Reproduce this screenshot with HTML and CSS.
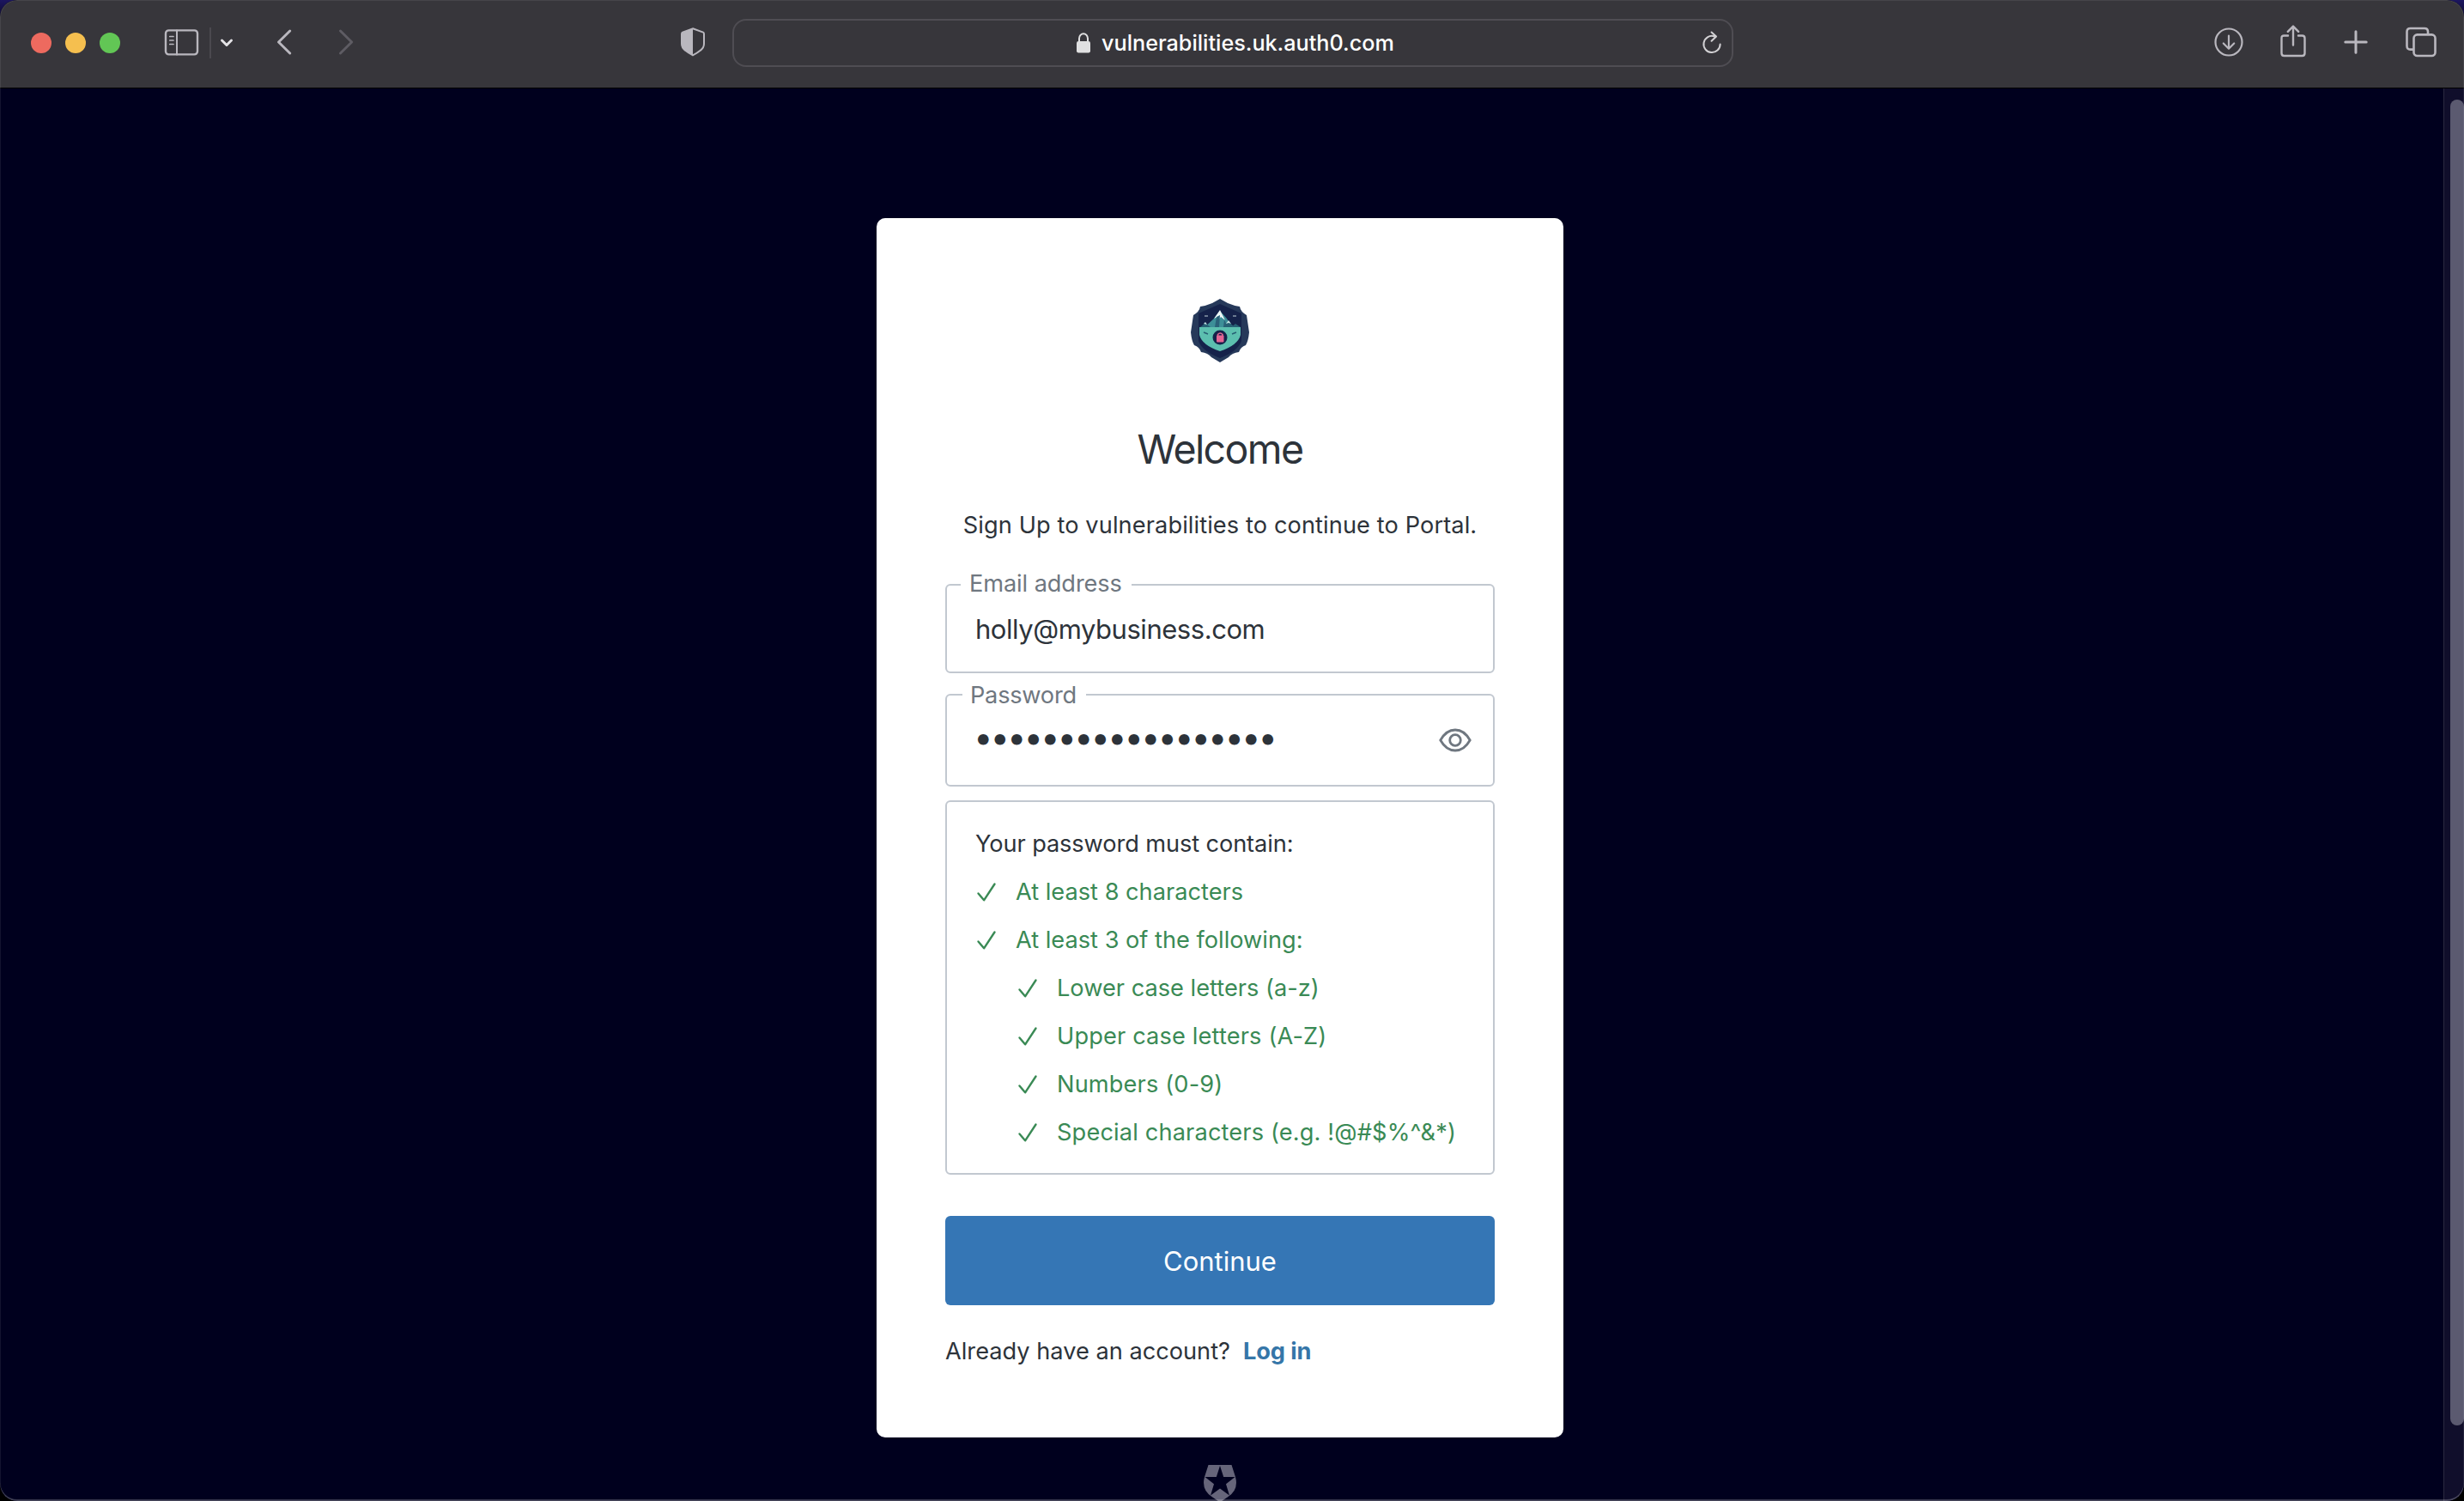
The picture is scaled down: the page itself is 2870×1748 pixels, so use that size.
FILE: index.html
```html
<!DOCTYPE html>
<html lang="en">
<head>
<meta charset="utf-8">
<title>Sign up</title>
<link rel="stylesheet" href="styles.css">
</head>
<body>
<div class="window">
  <header class="toolbar">
    <div class="lights"><span class="light red"></span><span class="light yellow"></span><span class="light green"></span></div>
    <svg class="sidebar" viewBox="0 0 40 32" width="40" height="32" fill="none" stroke="#b9b7be" stroke-width="2.4" stroke-linecap="round"><rect x="2" y="2.400" width="37" height="28" rx="3.6"/><path d="M15 2.500v28" stroke-width="2"/><path d="M6.800 9.500h4.2M6.800 14h4.2M6.800 18.500h4.2" stroke-width="1.700"/></svg>
    <span class="split"></span>
    <svg class="chevron" viewBox="0 0 16 10" width="16" height="10" fill="none" stroke="#e4e3e6" stroke-width="3" stroke-linecap="round" stroke-linejoin="round"><path d="M2.500 2L8 7.500 13.500 2"/></svg>
    <svg class="back" viewBox="0 0 18 30" width="18" height="30" fill="none" stroke="#b9b7be" stroke-width="3" stroke-linecap="round" stroke-linejoin="round"><path d="M15.700 2L2.500 15l13.200 13"/></svg>
    <svg class="forward" viewBox="0 0 18 30" width="18" height="30" fill="none" stroke="#5e5c63" stroke-width="3" stroke-linecap="round" stroke-linejoin="round"><path d="M2.500 2l13.200 13-13.200 13"/></svg>
    <svg class="shield" viewBox="0 0 28 34" width="28" height="34"><path d="M14 1.200L26 5.600Q27 6 27 7.500V19q0 4.500-4 7.600Q19 30 14 32.300 9 30 5 26.600 1 23.500 1 19V7.500Q1 6 2 5.600z" fill="none" stroke="#b9b7be" stroke-width="2"/><path d="M14 1.200V32.300Q9 30 5 26.600 1 23.500 1 19V7.500Q1 6 2 5.600z" fill="#b9b7be"/></svg>
    <div class="address">
      <svg class="lock" viewBox="0 0 16 24" width="16" height="24"><rect y="10" width="16" height="13.500" rx="2.200" fill="#e0e0e1"/><path d="M3 11V6.800a5 5.500 0 0 1 10 0V11" fill="none" stroke="#e0e0e1" stroke-width="2"/></svg>
      <span class="url">vulnerabilities.uk.auth0.com</span>
      <svg class="reload" viewBox="0 0 24 28" width="24" height="28" fill="none" stroke="#d2d1d4" stroke-width="2" stroke-linecap="round" stroke-linejoin="round"><path d="M14.500 6.200A9.600 9.600 0 1 0 21.600 15.500M11.500 1.500l5.500 5-5.500 5.300"/></svg>
    </div>
    <svg class="download" viewBox="0 0 34 34" width="34" height="34" fill="none" stroke="#b9b7be" stroke-width="2.200" stroke-linecap="round" stroke-linejoin="round"><circle cx="17" cy="17" r="15.500"/><path d="M17 9.500v15M10.800 18.500l6.200 6.200 6.200-6.200"/></svg>
    <svg class="share" viewBox="0 0 30 38" width="30" height="38" fill="none" stroke="#b9b7be" stroke-width="2.400" stroke-linecap="round" stroke-linejoin="round"><path d="M9 12.500H4.500q-3 0-3 3V33q0 3 3 3h21q3 0 3-3V15.500q0-3-3-3H21M15 23.500V2M8.800 7.800L15 1.600l6.200 6.200"/></svg>
    <svg class="plus" viewBox="0 0 28 28" width="28" height="28" stroke="#b9b7be" stroke-width="3" stroke-linecap="round"><path d="M14 1.800v24.400M1.800 14h24.400"/></svg>
    <svg class="tabs" viewBox="0 0 36 36" width="36" height="36" fill="none" stroke="#b9b7be" stroke-width="2.600"><rect x="9.500" y="9.400" width="25" height="24.600" rx="4"/><path d="M9 26.600H5.500q-4 0-4-4V6q0-4 4-4H22q4 0 4 4v3"/></svg>
  </header>
  <main class="page">
    <div class="content">
      <section class="card">
        <svg class="logo" viewBox="0 0 72 76" width="72" height="76">
          <path d="M36 1l9 5q7 3 14 4 1 6 8 10l3 20q-1 10-4 15-6 2-8 8-8 1-12 6l-10 6-10-6q-4-5-12-6-2-6-8-8-3-5-4-15l3-20q7-4 8-10 7-1 14-4z" fill="#26395a"/>
          <path d="M36 7l25 11v32q-4 12-25 20-21-8-25-20V18z" fill="#15224a"/>
          <path d="M12 34h48v9q-3 12-24 19-21-7-24-19z" fill="#5cbfaf"/>
          <path d="M18 34l11-10 7-9 8 9 3 5 6 5z" fill="#3d8f98"/><path d="M36 14l-7 10 4-2 1 4 3-4 5 4z" fill="#eef7f7"/>
          <path d="M32 22l4-2-1 14h-5zM41 25l4 9h-5z" fill="#2a6179"/>
          <path d="M13 34l6-5 6 5zM40 34l6-7 6 7zM49 34l5-4 6 4z" fill="#276074"/><path d="M46 26l-3 4 3-1 3 1zM19 28l-2 2 4 1z" fill="#c5e5e3"/>
          <path d="M18 21h4M51 21h4" stroke="#c2d4d9" stroke-width="1"/>
          <path d="M17 40l5 2M55 40l-5 2" stroke="#276074" stroke-width="1.500"/>
          <circle cx="36" cy="46" r="8.500" fill="#15224a"/>
          <rect x="32" y="43.500" width="8.500" height="8" rx="1" fill="#e26594"/><path d="M33.500 45v-2.500q2.700-3 5.500 0V45" fill="none" stroke="#e26594" stroke-width="1.600"/>
        </svg>
        <h1 class="title">Welcome</h1>
        <p class="intro">Sign Up to vulnerabilities to continue to Portal.</p>
        <div class="field email"><span class="label">Email address</span><span class="value">holly@mybusiness.com</span></div>
        <div class="field password"><span class="label">Password</span><span class="dots">••••••••••••••••••</span>
          <svg class="eye" viewBox="0 0 38 28" width="38" height="28"><path d="M1.800 14Q8.500 2 19 2T36.200 14Q29.500 26 19 26T1.800 14z"/><circle cx="19" cy="14" r="6.300"/></svg></div>
        <div class="rules">
          <p class="rule head">Your password must contain:</p>
          <p class="rule ok"><svg class="check" viewBox="0 0 22 22" width="22" height="22"><path d="M1.500 12.500l6.600 7.800L20.500 1.500"/></svg>At least 8 characters</p>
          <p class="rule ok"><svg class="check" viewBox="0 0 22 22" width="22" height="22"><path d="M1.500 12.500l6.600 7.800L20.500 1.500"/></svg>At least 3 of the following:</p>
          <p class="rule ok sub"><svg class="check" viewBox="0 0 22 22" width="22" height="22"><path d="M1.500 12.500l6.600 7.800L20.500 1.500"/></svg>Lower case letters (a-z)</p>
          <p class="rule ok sub wide"><svg class="check" viewBox="0 0 22 22" width="22" height="22"><path d="M1.500 12.500l6.600 7.800L20.500 1.500"/></svg>Upper case letters (A-Z)</p>
          <p class="rule ok sub wide"><svg class="check" viewBox="0 0 22 22" width="22" height="22"><path d="M1.500 12.500l6.600 7.800L20.500 1.500"/></svg>Numbers (0-9)</p>
          <p class="rule ok sub wide"><svg class="check" viewBox="0 0 22 22" width="22" height="22"><path d="M1.500 12.500l6.600 7.800L20.500 1.500"/></svg>Special characters (e.g. !@#$%^&amp;*)</p>
        </div>
        <button class="continue">Continue</button>
        <p class="login"><span>Already have an account?</span><a class="link">Log in</a></p>
      </section>
      <svg class="badge" viewBox="0 0 38 42" width="38" height="42"><path fill="#66657a" d="M5.500 0h27L37 14Q41 29 28.500 37L19 43.500 9.500 37Q-3 29 1 14z"/><path fill="#00001e" d="M19 1l4.200 13H36.500L26 22.200 30 35.500 19 27.500 8 35.500l4-13.300L1.500 14h13.300z"/></svg>
    </div>
    <div class="track"><span class="thumb"></span></div>
  </main>
</div>
</body>
</html>
```
FILE: styles.css
```css
* { box-sizing: border-box; }
body { margin: 0; background: linear-gradient(#1c1660, #000 40px); font-family: Inter, "Liberation Sans", sans-serif; color: #2d333a; }
h1, p { margin: 0; font-weight: 400; }
svg { display: block; flex: none; overflow: visible; }
.window { width: 2870px; height: 1748px; overflow: hidden; display: flex; flex-direction: column; background: #00001e; border-radius: 20px; position: relative; }
.window::after { content: ""; position: absolute; inset: 0; border-radius: 20px; box-shadow: inset 0 -2px 0 rgba(255, 255, 255, .2), inset 0 0 0 1px rgba(255, 255, 255, .08); pointer-events: none; }
.toolbar { height: 103px; flex: none; display: flex; align-items: center; padding: 0 32px 4px 36px; background: #37363b; border-bottom: 1px solid #000; }
.lights { display: flex; gap: 16px; padding-top: 2px; }
.light { width: 24px; height: 24px; border-radius: 50%; }
.red { background: #ed6a5f; }
.yellow { background: #f5bf4f; }
.green { background: #62c655; }
.sidebar { margin-left: 51px; }
.split { width: 2px; height: 36px; background: #4b494f; margin: 2px 0 0 13px; }
.chevron { margin: 1px 0 0 10px; }
.back { margin-left: 50px; }
.forward { margin-left: 54px; }
.shield { margin-left: 381px; }
.address { width: 1166px; height: 56px; margin: 2px 0 0 32px; border: 2px solid #4f4d53; border-radius: 16px; display: flex; align-items: center; padding: 0 11px 0 399px; }
.url { margin-left: 13px; font-size: 25.2px; font-weight: 500; color: #fff; }
.reload { margin-left: auto; }
.download { margin-left: 560px; }
.share { margin: 0 0 3px 43px; }
.plus { margin: 0 0 1px 44px; }
.tabs { margin-left: 44px; }
.page { flex: 1; min-height: 0; display: flex; justify-content: space-between; }
.content { flex: 1; display: flex; flex-direction: column; align-items: center; padding: 151px 4px 0 0; }
.card { width: 800px; height: 1420px; flex: none; background: #fff; border-radius: 10px; padding: 93px 80px 0; display: flex; flex-direction: column; }
.logo { align-self: center; }
.title { margin-top: 71px; height: 58px; line-height: 58px; font-size: 46.5px; letter-spacing: -1.6px; text-align: center; }
.intro { margin-top: 43px; height: 34px; line-height: 34px; font-size: 27.2px; letter-spacing: .1px; text-align: center; }
.field { border: 2px solid #c2c8d0; border-radius: 6px; display: flex; align-items: center; justify-content: space-between; padding: 0 25px 0 33px; position: relative; }
.email { margin-top: 51px; height: 104px; }
.password { margin-top: 24px; height: 108px; }
.label { position: absolute; left: 16px; top: -19px; height: 34px; line-height: 34px; padding: 0 11px 0 10px; background: #fff; color: #6f7780; font-size: 27.2px; letter-spacing: -.1px; }
.password .label { left: 18px; top: -17px; padding-left: 9px; letter-spacing: -.25px; }
.value { font-size: 31px; letter-spacing: -.46px; }
.dots { font-size: 40px; line-height: 40px; letter-spacing: -3px; margin: -7px 0 0 -2px; }
.rules { margin-top: 16px; height: 436px; border: 2px solid #c2c8d0; border-radius: 6px; padding: 20px 33px; }
.rule { height: 56px; display: flex; align-items: center; font-size: 27.2px; white-space: nowrap; }
.head { letter-spacing: -.1px; }
.ok { color: #3a8a55; gap: 23px; padding-left: 2px; }
.sub { padding-left: 50px; }
.wide { letter-spacing: .15px; }
.check { margin-top: 1px; fill: none; stroke: #3a8a55; stroke-width: 2.4; stroke-linecap: round; stroke-linejoin: round; }
.eye { fill: none; stroke: #6f7780; stroke-width: 2.8; }
.continue { margin-top: 48px; height: 104px; flex: none; border: 0; border-radius: 6px; background: #3576b5; color: #fff; font: 400 31px Inter, sans-serif; }
.login { margin-top: 37px; display: flex; gap: 15px; font-size: 27.2px; line-height: 34px; }
.link { color: #3576a8; font-weight: 700; letter-spacing: -.1px; }
.badge { margin-top: 32px; }
.track { width: 24px; background: #100e2b; border-left: 1px solid #2b293f; padding: 13px 0 88px 7px; display: flex; }
.thumb { width: 16px; border-radius: 8px; background: #5b5a70; }
```
